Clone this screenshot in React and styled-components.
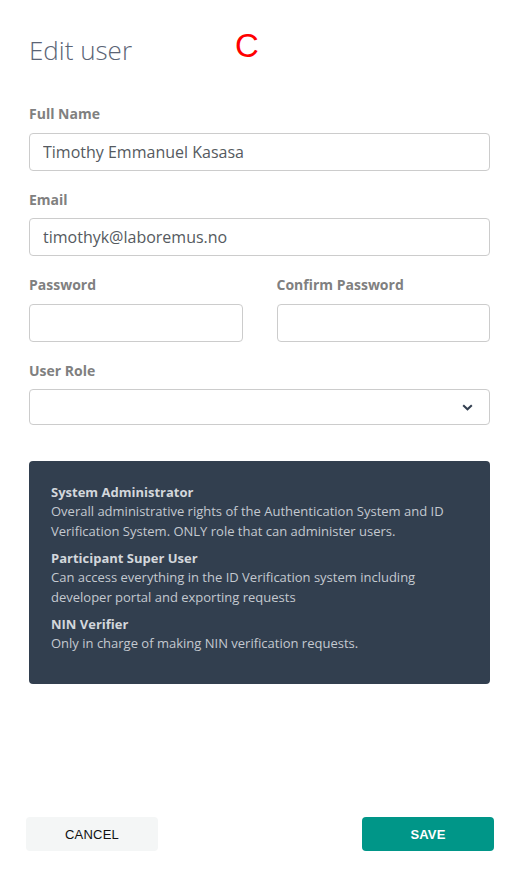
import React from 'react'
import styled, { createGlobalStyle } from 'styled-components'

const GlobalStyle = createGlobalStyle`
  html, body {
    margin: 0;
    padding: 0;
    background: #fff;
  }
  * { box-sizing: border-box; }
`;

const Page = styled.div`
  position: relative;
  display: flex;
  flex-direction: column;
  min-height: 877px;
  width: 520px;
  font-family: 'Open Sans', 'Liberation Sans', sans-serif;
`;

const Body = styled.div`
  padding: 32px 30px 0 29px;
`;

const Title = styled.h1`
  margin: 0 0 36px;
  font-size: 26px;
  line-height: 36px;
  font-weight: 300;
  color: #5b6475;
`;

const Marker = styled.span`
  position: absolute;
  left: 235px;
  top: 27px;
  font-family: 'Liberation Sans', Arial, sans-serif;
  font-size: 33px;
  color: #ff0000;
`;

const Row = styled.div`
  display: grid;
  grid-template-columns: 1fr 1fr;
  column-gap: 34px;
`;

const Field = styled.div`
  margin-bottom: 19px;
`;

const Label = styled.label`
  display: block;
  font-size: 14px;
  line-height: 20px;
  font-weight: 700;
  color: #808080;
  margin-bottom: 8.5px;
`;

const Input = styled.input`
  display: block;
  width: 100%;
  height: 38px;
  border: 1px solid #cccccc;
  border-radius: 4px;
  padding: 0 13px;
  font-family: 'Open Sans', sans-serif;
  font-size: 16px;
  color: #555a60;
  outline: none;
`;

const Select = styled.div`
  display: flex;
  align-items: center;
  justify-content: flex-end;
  height: 36px;
  margin-top: 1px;
  border: 1px solid #cccccc;
  border-radius: 4px;
  padding: 0 16px;
`;

const Panel = styled.div`
  margin-top: 36px;
  background: #323f4f;
  border-radius: 4px;
  padding: 22px 22px 31px;
`;

const Role = styled.div`
  & + & { margin-top: 8px; }
`;

const RoleName = styled.div`
  font-size: 13px;
  line-height: 18px;
  font-weight: 700;
  color: #d3d7dc;
`;

const RoleText = styled.div`
  font-size: 13px;
  line-height: 20px;
  color: #c4c9d0;
`;

const Footer = styled.div`
  margin-top: auto;
  display: flex;
  justify-content: space-between;
  padding: 0 26px 26px;
`;

const Button = styled.button`
  width: 132px;
  height: 34px;
  border: none;
  border-radius: 4px;
  background: ${p => (p.$primary ? '#009688' : '#f4f6f6')};
  color: ${p => (p.$primary ? '#ffffff' : '#111111')};
  font-family: 'Liberation Sans', Arial, sans-serif;
  font-size: 13px;
  font-weight: ${p => (p.$primary ? 700 : 400)};
  letter-spacing: 0.2px;
`;

const roles = [
  {
    name: 'System Administrator',
    text: 'Overall administrative rights of the Authentication System and ID Verification System. ONLY role that can administer users.'
  },
  {
    name: 'Participant Super User',
    text: 'Can access everything in the ID Verification system including developer portal and exporting requests'
  },
  {
    name: 'NIN Verifier',
    text: 'Only in charge of making NIN verification requests.'
  }
];

export default function App() {
  return (
    <Page>
      <GlobalStyle />
      <Marker>C</Marker>
      <Body>
        <Title>Edit user</Title>
        <Field>
          <Label>Full Name</Label>
          <Input defaultValue="Timothy Emmanuel Kasasa" />
        </Field>
        <Field>
          <Label>Email</Label>
          <Input defaultValue="timothyk@laboremus.no" />
        </Field>
        <Row>
          <Field>
            <Label>Password</Label>
            <Input type="password" />
          </Field>
          <Field>
            <Label>Confirm Password</Label>
            <Input type="password" />
          </Field>
        </Row>
        <Field>
          <Label>User Role</Label>
          <Select>
            <svg width="11" height="7" viewBox="0 0 11 7">
              <polyline points="1.2,1.2 5.5,5.3 9.8,1.2" fill="none" stroke="#333f50" strokeWidth="2" />
            </svg>
          </Select>
        </Field>
        <Panel>
          {roles.map(r => (
            <Role key={r.name}>
              <RoleName>{r.name}</RoleName>
              <RoleText>{r.text}</RoleText>
            </Role>
          ))}
        </Panel>
      </Body>
      <Footer>
        <Button>CANCEL</Button>
        <Button $primary>SAVE</Button>
      </Footer>
    </Page>
  )
}
